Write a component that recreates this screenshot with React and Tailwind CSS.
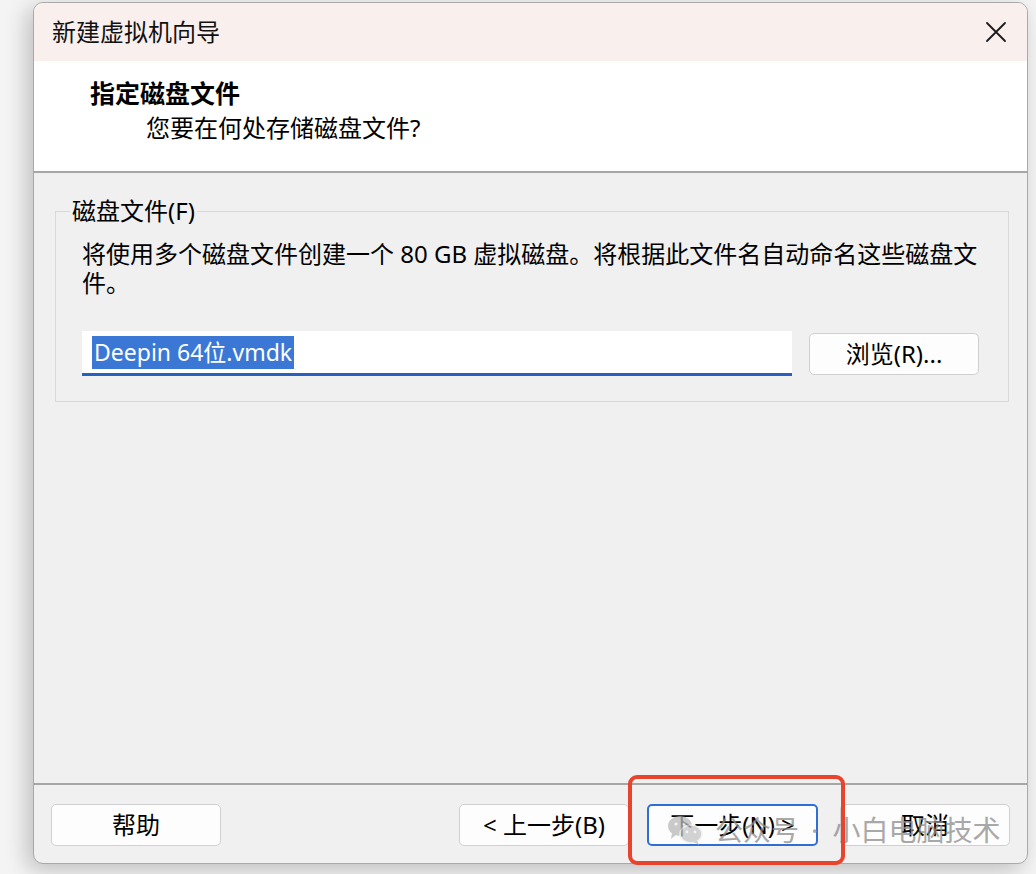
import React from "react";

const FONT = { fontFamily: '"Noto Sans", "Noto Sans CJK SC", sans-serif' };

function WinButton({ children, primary, className = "" }) {
  return (
    <button
      className={`flex h-[42px] w-[170px] items-center justify-center rounded-[5px] bg-[#fdfdfd] text-[24px] leading-none text-black ${
        primary ? "border-2 border-[#2f6fd3]" : "border border-[#d0d0d0]"
      } ${className}`}
    >
      {children}
    </button>
  );
}

function WeChatIcon() {
  return (
    <svg width="36" height="30" viewBox="0 0 36 30" aria-hidden>
      <ellipse cx="13" cy="11" rx="12" ry="10" fill="#b8b8b8" />
      <path d="M5 18 L4 24 L10 19 Z" fill="#b8b8b8" />
      <ellipse cx="24" cy="19" rx="11" ry="9" fill="#c4c4c4" stroke="#f0f0f0" strokeWidth="1.5" />
      <path d="M30 25 L32 30 L26 27 Z" fill="#c4c4c4" />
      <circle cx="9" cy="9" r="1.6" fill="#f0f0f0" />
      <circle cx="17" cy="9" r="1.6" fill="#f0f0f0" />
      <circle cx="20" cy="17" r="1.4" fill="#f0f0f0" />
      <circle cx="28" cy="17" r="1.4" fill="#f0f0f0" />
    </svg>
  );
}

export default function App() {
  return (
    <div className="relative h-[874px] w-[1036px] overflow-hidden bg-[#f4f4f4] pl-[33px] pt-[2px]" style={FONT}>
      <div className="flex h-[862px] w-[995px] flex-col overflow-hidden rounded-[10px] border border-[#a9a9a9] bg-[#f0f0f0] shadow-[-6px_6px_22px_rgba(0,0,0,0.22)]">
        {/* title bar */}
        <div className="flex h-[58px] shrink-0 items-center justify-between bg-[#f9efed] pl-[18px] pr-[19px]">
          <span className="text-[24px] leading-none text-[#111]">新建虚拟机向导</span>
          <svg width="24" height="24" viewBox="0 0 24 24" aria-hidden>
            <path d="M3 3 L21 21 M21 3 L3 21" stroke="#1a1a1a" strokeWidth="1.8" strokeLinecap="round" />
          </svg>
        </div>

        {/* header */}
        <div className="h-[112px] shrink-0 border-b-2 border-[#a6a6a6] bg-white pl-[56px] pt-[16px]">
          <div className="text-[25px] font-bold leading-[32px] text-black">指定磁盘文件</div>
          <div className="mt-[3px] pl-[56px] text-[24px] leading-[32px] text-black">您要在何处存储磁盘文件?</div>
        </div>

        {/* body */}
        <div className="flex-1 px-[20px] pt-[23px] pl-[21px]">
          <fieldset className="border border-[#d9d9d9] pb-[25px] pl-[26px] pr-[29px]">
            <legend className="ml-[-12px] px-[2px] text-[24px] leading-[30px] text-black">磁盘文件(F)</legend>
            <p className="mt-[13px] text-[24px] leading-[29px] text-black">
              <span className="whitespace-nowrap">将使用多个磁盘文件创建一个 80 GB 虚拟磁盘。将根据此文件名自动命名这些磁盘文</span>
              <br />
              件。
            </p>
            <div className="mt-[34px] flex items-center gap-[17px]">
              <div className="flex h-[45px] w-[710px] items-center border-b-[3px] border-[#2860bf] bg-white pl-[10px]">
                <span className="bg-[#3b78d6] px-[2px] text-[23px] leading-[33px] text-white">Deepin 64位.vmdk</span>
              </div>
              <WinButton className="w-[168px]">浏览(R)...</WinButton>
            </div>
          </fieldset>
        </div>

        {/* footer */}
        <div className="flex h-[80px] shrink-0 items-start justify-between border-t-2 border-[#a6a6a6] pl-[17px] pr-[17px] pt-[19px]">
          <WinButton>帮助</WinButton>
          <div className="flex items-center">
            <WinButton>&lt; 上一步(B)</WinButton>
            <WinButton primary className="ml-[18px] w-[171px]">下一步(N) &gt;</WinButton>
            <WinButton className="ml-[22px] w-[167px]">取消</WinButton>
          </div>
        </div>
      </div>

      {/* watermark */}
      <div className="pointer-events-none absolute left-[667px] top-[815px] flex items-center text-[28px] leading-none text-[#8c8c8c] opacity-75">
        <WeChatIcon />
        <span className="ml-[12px]">公众号</span>
        <span className="ml-[12px]">·</span>
        <span className="ml-[14px]">小白电脑技术</span>
      </div>

      {/* annotation */}
      <div className="pointer-events-none absolute left-[628px] top-[775px] h-[90px] w-[217px] rounded-[9px] border-4 border-[#e8432d]" />
    </div>
  );
}
